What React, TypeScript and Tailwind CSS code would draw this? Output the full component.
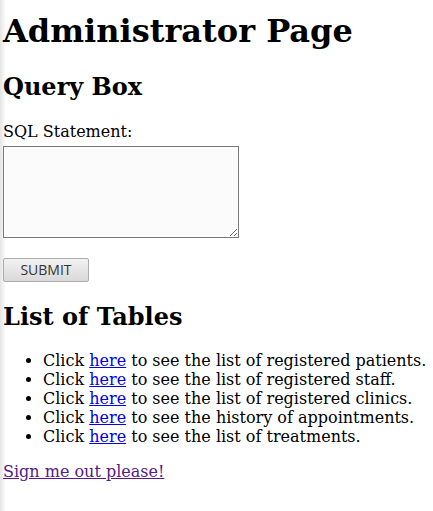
const TABLE_LINKS = [
  'to see the list of registered patients.',
  'to see the list of registered staff.',
  'to see the list of registered clinics.',
  'to see the history of appointments.',
  'to see the list of treatments.',
]

export default function App() {
  return (
    <div className="min-h-[511px] bg-[linear-gradient(to_right,#e4e4e4_0px,#ffffff_6px)] pl-[3px] pt-[13px] font-['DejaVu_Serif',serif] text-[16px] leading-[19px] text-black">
      <h1 className="text-[32px] font-bold leading-[37px]">Administrator Page</h1>
      <h2 className="mt-[23px] text-[24px] font-bold leading-[28px]">Query Box</h2>

      <form className="mt-[21px]" onSubmit={(e) => e.preventDefault()}>
        <label htmlFor="sql" className="block">SQL Statement:</label>
        <textarea
          id="sql"
          className="mt-[5px] block h-[92px] w-[236px] border border-[#7a7a7a] bg-[#fbfbfb] outline-none"
        />
        <button
          type="submit"
          className="mt-[20px] h-[24px] w-[86px] rounded-[2px] border border-[#adadad] bg-[linear-gradient(#f2f2f2,#d9d9d9)] font-['Open_Sans',sans-serif] text-[14px] leading-none text-[#333]"
        >
          SUBMIT
        </button>
      </form>

      <h2 className="mt-[21px] text-[24px] font-bold leading-[28px]">List of Tables</h2>
      <ul className="mt-[20px] list-disc pl-[40px]">
        {TABLE_LINKS.map((t, i) => (
          <li key={i}>
            Click <a href="#" className="text-[#0000ee] underline">here</a> {t}
          </li>
        ))}
      </ul>

      <p className="mt-[16px]">
        <a href="#" className="text-[#551a8b] underline">Sign me out please!</a>
      </p>
    </div>
  )
}
